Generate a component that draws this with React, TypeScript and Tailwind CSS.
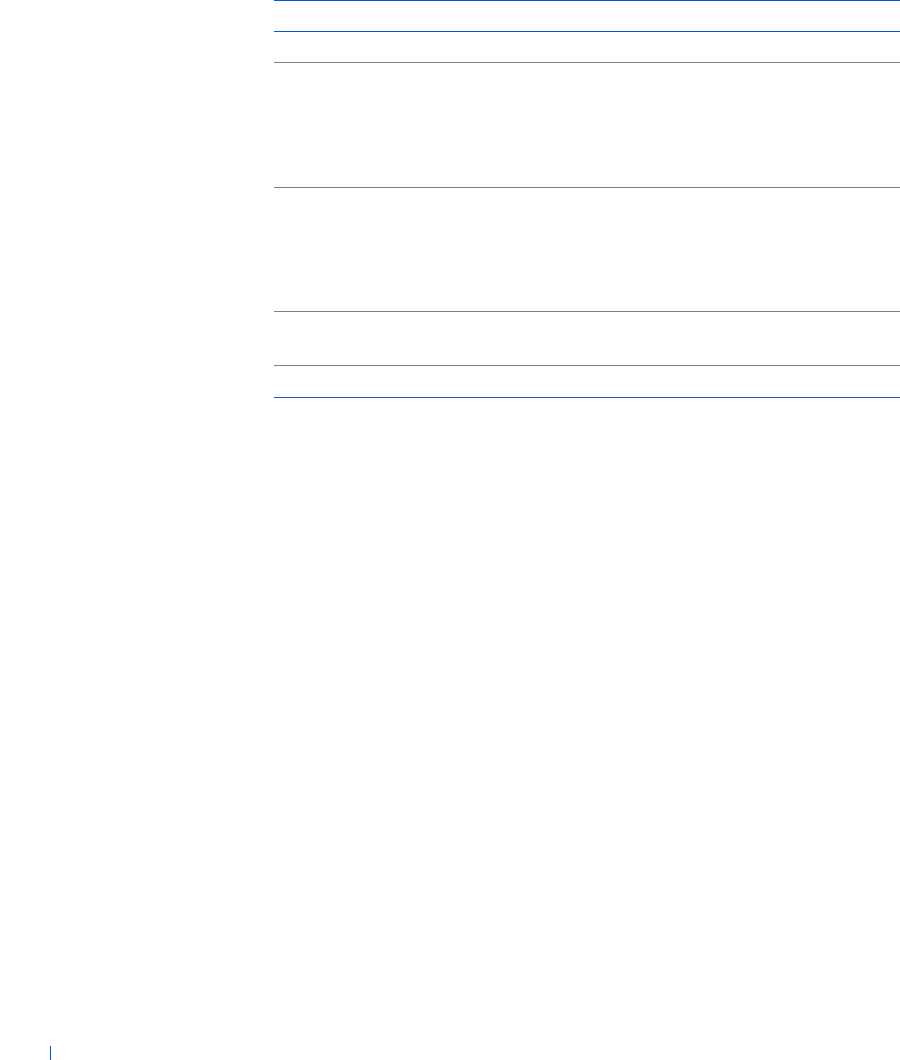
import React from "react";

export default function App() {
  return (
    <div className="w-[900px] h-[1060px] bg-white flex flex-col font-['Liberation_Sans',sans-serif]">
      <div className="pl-[274px] flex flex-col">
        <div className="border-t border-[#0050ef] h-[31px]" />
        <div className="border-t border-[#0050ef] h-[31px]" />
        <div className="border-t border-[#808080] h-[125px]" />
        <div className="border-t border-[#808080] h-[124px]" />
        <div className="border-t border-[#808080] h-[54px]" />
        <div className="border-t border-[#808080] h-[32px]" />
        <div className="border-t border-[#1a50c8] h-0" />
      </div>
      <div className="flex-1" />
      <div className="pl-[50px]">
        <div className="w-px h-[14px] bg-[#0050ef]" />
      </div>
    </div>
  );
}
